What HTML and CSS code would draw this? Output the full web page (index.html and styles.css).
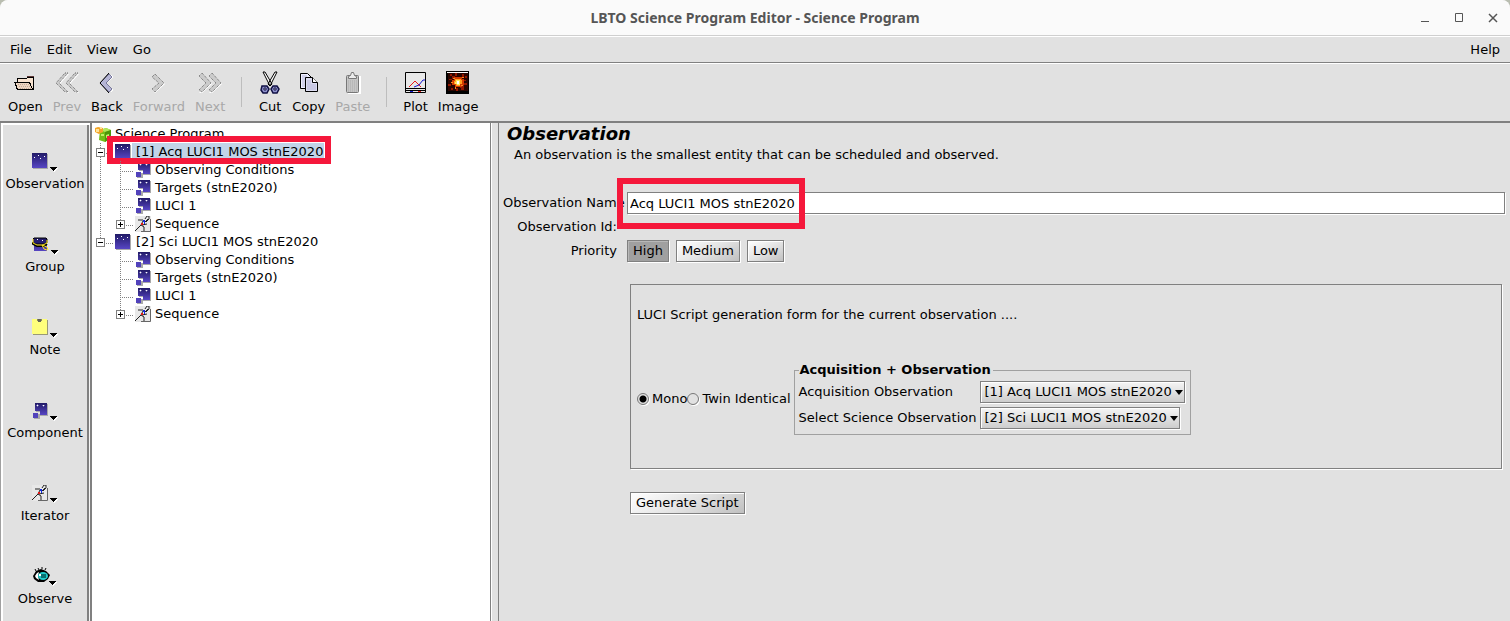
FILE: index.html
```html
<!DOCTYPE html>
<html lang="en">
<head>
  <meta charset="UTF-8">
  <meta name="viewport" content="width=device-width, initial-scale=1.0">
  <title>LBTO Science Program Editor - Science Program</title>
  <link rel="stylesheet" href="styles.css">
</head>
<body>

  <!-- Shared icons -->
  <svg class="icon-defs" width="0" height="0" aria-hidden="true">
    <defs>
      <linearGradient id="night" x1="0" y1="0" x2="0" y2="1">
        <stop offset="0" stop-color="#211a66"/>
        <stop offset="1" stop-color="#5746c4"/>
      </linearGradient>
      <symbol id="icon-observation" viewBox="0 0 16 16">
        <path d="M1 1h15v15H1z" fill="#a9a9a9"/>
        <path d="M0 0h15v15H0z" fill="url(#night)"/>
        <path d="M2 4h1v1H2zM6 2h1v1H6zM8 5h1v1H8zM12 3h1v1h-1z" fill="#fff"/>
      </symbol>
      <symbol id="icon-component" viewBox="0 0 16 16">
        <path d="M4 1h12v12H8V9H4zM2 11h6v5H2z" fill="#a9a9a9"/>
        <path d="M3 0h12v12H8V8H3z" fill="url(#night)"/>
        <path d="M1 10h5v5H1z" fill="#5142bb"/>
        <path d="M5 2h1v1H5zM11 2h1v1h-1z" fill="#fff"/>
        <path d="M4 2h1v1H4zM6 2h1v1H6zM5 1h1v1H5zM5 3h1v1H5zM10 2h1v1h-1zM12 2h1v1h-1zM11 3h1v1h-1z" fill="#6f69ad"/>
      </symbol>
      <symbol id="icon-runner" viewBox="0 0 16 16">
        <path d="M0 0h16v16H0z" fill="#e8e8e8"/>
        <path d="M15.500 3v12.500H6" fill="none" stroke="#666"/>
        <path d="M3 4h5l2 2 3-3M8 5L6 9l-3 3-3 3M6 9l3 2v4M7 9l5-1M10 3l2-3h2v3l-3 3" fill="none" stroke="#222"/>
        <path d="M8 4h2v2H8zM9 6h1v2H9z" fill="#1028e0"/>
        <path d="M6 7h2v2H6z" fill="#e01818"/>
      </symbol>
      <symbol id="icon-arrow" viewBox="0 0 8 5">
        <path d="M1 1h7v1H7v1H6v1H5v1H4z" fill="#fff"/>
        <path d="M0 0h7v1H6v1H5v1H4v1H3V3H2V2H1V1H0z" fill="#000"/>
      </symbol>
    </defs>
  </svg>

  <div class="window">
    <header class="titlebar">
      <h1 class="window-title">LBTO Science Program Editor - Science Program</h1>
      <div class="window-buttons">
        <button type="button" aria-label="Minimize"><svg width="10" height="10" viewBox="0 0 10 10"><path d="M1 8.500h8" stroke="#555"/></svg></button>
        <button type="button" aria-label="Maximize"><svg width="10" height="10" viewBox="0 0 10 10"><path d="M1.500 .5h7v8h-7z" fill="none" stroke="#555"/></svg></button>
        <button type="button" aria-label="Close"><svg width="10" height="10" viewBox="0 0 10 10"><path d="M1 1l8 8M9 1L1 9" stroke="#555" stroke-width="1.500"/></svg></button>
      </div>
    </header>

    <nav class="menubar">
      <button type="button">File</button>
      <button type="button">Edit</button>
      <button type="button">View</button>
      <button type="button">Go</button>
      <button type="button" class="menu-help">Help</button>
    </nav>

    <div class="toolbar">
      <button type="button" class="tool">
        <svg class="tool-icon" viewBox="0 0 24 24" shape-rendering="crispEdges">
          <path d="M14 5h7v5h-7z" fill="#5c3636"/>
          <path d="M4 7h9l2-1h6v13H4z" fill="#000"/>
          <path d="M5 8h8l2-1h5v10H5z" fill="#f7e2cf"/>
          <path d="M1 11h16l3 8H4z" fill="#000"/>
          <path d="M3 12h13l3 6H5z" fill="#ecd5c2"/>
          <path d="M5 13.500h11M6 15.500h11M7 17.500h11" stroke="#c5a995" stroke-dasharray="1 1"/>
        </svg>
        Open
      </button>
      <button type="button" class="tool" disabled>
        <svg class="tool-icon" viewBox="0 0 24 24">
          <path d="M10 3h4l-9 10 9 9h-3L2 13zM20 3h4l-9 10 9 9h-3l-9-9z" fill="#fff"/>
          <path d="M10 2h3l-9 10 9 9h-3l-9-9zM20 2h3l-9 10 9 9h-3l-9-9z" fill="#cbcbcb" stroke="#666" stroke-dasharray="1 1"/>
        </svg>
        Prev
      </button>
      <button type="button" class="tool">
        <svg class="tool-icon" viewBox="0 0 24 24">
          <path d="M16 4l2 2-7 6 7 7-2 2" fill="none" stroke="#fff"/>
          <path d="M14 3l3 3-6 6 6 6-3 3-9-9z" fill="#b5b5d5" stroke="#777799"/>
          <path d="M14 2l-9 10 9 10" fill="none" stroke="#000"/>
        </svg>
        Back
      </button>
      <button type="button" class="tool" disabled>
        <svg class="tool-icon" viewBox="0 0 24 24">
          <path d="M8 4l10 9-10 9-2-3 7-6-7-6z" fill="#fff"/>
          <path d="M8 3l9 9-9 9-3-3 7-6-7-6z" fill="#cbcbcb" stroke="#666" stroke-dasharray="1 1"/>
        </svg>
        Forward
      </button>
      <button type="button" class="tool" disabled>
        <svg class="tool-icon" viewBox="0 0 24 24">
          <path d="M4 3l10 10-10 9H1l9-9-9-9zM14 3l10 10-10 9h-3l9-9-9-9z" fill="#fff"/>
          <path d="M4 2l9 10-9 9-3-2 7-7-7-7zM14 2l9 10-9 9-3-2 7-7-7-7z" fill="#cbcbcb" stroke="#666" stroke-dasharray="1 1"/>
        </svg>
        Next
      </button>
      <span class="tool-separator"></span>
      <button type="button" class="tool">
        <svg class="tool-icon" viewBox="0 0 24 24">
          <path d="M5 1h2l7 12-2 2zM19 1h-2l-7 12 2 2z" fill="#fff" stroke="#000"/>
          <path d="M4 15h5l2 3-2 4H5l-2-3zM15 15h4l2 3-2 4h-4l-2-4z" fill="#8f91cc" stroke="#111144" stroke-width="1.500"/>
          <path d="M6 17h2v2H6zM16 17h2v2h-2z" fill="#fff" stroke="#111144"/>
        </svg>
        Cut
      </button>
      <button type="button" class="tool">
        <svg class="tool-icon" viewBox="0 0 24 24">
          <path d="M3.500 2.500h7l4 4v11h-11z" fill="#eeeeff" stroke="#000"/>
          <path d="M5 5h5M5 7h7M5 9h7M5 11h5M5 13h5M5 15h5" stroke="#b5b5d7"/>
          <path d="M8.500 6.500h7l5 5v9h-12z" fill="#dcdcf0" stroke="#000"/>
          <path d="M15.500 6.500v5h5" fill="#fff" stroke="#000"/>
          <path d="M10 10h4M10 12h4M10 14h9M10 16h9M10 18h9" stroke="#b5b5d7"/>
        </svg>
        Copy
      </button>
      <button type="button" class="tool" disabled>
        <svg class="tool-icon" viewBox="0 0 24 24">
          <path d="M6 5h14v18H7z" fill="#fff"/>
          <rect x="5.500" y="4.500" width="12" height="17" rx="1" fill="#c6c6c6" stroke="#777"/>
          <path d="M7 10h9M7 12h9M7 14h9M7 16h9M7 18h9M7 20h9" stroke="#aaa" stroke-dasharray="1 1"/>
          <path d="M7.500 7.500v-2l2-1 1-3h2l1 3 2 1v2z" fill="#ececec" stroke="#777"/>
        </svg>
        Paste
      </button>
      <span class="tool-separator"></span>
      <button type="button" class="tool">
        <svg class="tool-icon" viewBox="0 0 24 24">
          <path d="M1.500 1.500h20v20h-20z" fill="#e8e8e8" stroke="#000"/>
          <path d="M2 17.500h19M2 19.500h19" stroke="#000"/>
          <path d="M5 16l6-6 6 6" fill="none" stroke="#e81818"/>
          <path d="M10 16l5-2 4-5h2" fill="none" stroke="#1818d0"/>
          <path d="M6 20h3v1H6z" fill="#1818d0"/><path d="M14 20h3v1h-3z" fill="#e81818"/>
        </svg>
        Plot
      </button>
      <button type="button" class="tool">
        <svg class="tool-icon" viewBox="0 0 24 24" shape-rendering="crispEdges">
          <path d="M0 0h23v23H0z" fill="#000"/>
          <path d="M2 2h20v18H2z" fill="#2b0500"/>
          <path d="M4 3h2v2H4zM9 2h2v3H9zM16 3h2v3h-2zM19 5h2v2h-2zM3 8h3v1H3zM2 13h3v2H2zM5 17h2v2H5zM10 17h2v3h-2zM15 17h3v2h-3zM18 12h3v2h-3zM18 9h2v1h-2zM6 5h3v3H6zM14 14h4v3h-4z" fill="#941800"/>
          <path d="M8 6h8v2h2v6h-2v2H9v-2H6V9h2z" fill="#d33a00"/>
          <path d="M7 7h2v1H7zM16 6h2v1h-2zM5 11h2v1H5zM15 14h2v1h-2zM9 16h1v2H9z" fill="#ff8a20"/>
          <path d="M9 8h6v1h1v4h-2v2h-4v-2H8v-3h1z" fill="#ffa020"/>
          <path d="M10 9h4v5h-3v-1H9v-2h1z" fill="#ffe860"/>
          <path d="M11 10h2v3h-2z" fill="#fff"/>
          <path d="M1 1h21v1H1z" fill="#fff"/>
        </svg>
        Image
      </button>
    </div>

    <main class="workspace">
      <aside class="palette">
        <button type="button" class="palette-item">
          <svg class="palette-icon" viewBox="0 0 26 20">
            <use href="#icon-observation" x="0" y="2" width="16" height="16"/>
            <use href="#icon-arrow" x="18" y="16" width="8" height="5"/>
          </svg>
          Observation
        </button>
        <button type="button" class="palette-item">
          <svg class="palette-icon" viewBox="0 0 26 20">
            <path d="M2 6h13v11H2z" fill="url(#night)"/>
            <path d="M1 5l1-1h12l1 1v4l-3 1H2L1 8" fill="#231c6c" stroke="#000"/>
            <path d="M1 8v2l4 2h7l3-2" fill="none" stroke="#000" stroke-width="2"/>
            <path d="M1 5v4l4 2h6l4-2V6M10 11l5 2 1 3M10 11l2 4 3 1" fill="none" stroke="#ffe619"/>
            <path d="M5 5h1v1H5zM10 6h1v1h-1z" fill="#fff"/>
            <use href="#icon-arrow" x="19" y="16" width="8" height="5"/>
          </svg>
          Group
        </button>
        <button type="button" class="palette-item">
          <svg class="palette-icon" viewBox="0 0 26 20">
            <path d="M1 3h15v15H1z" fill="#999977"/>
            <path d="M0 2h15v15H0z" fill="#ffff7c"/>
            <path d="M5 2h5v2H5z" fill="#888866"/><path d="M6 2h3v3H6z" fill="#666655"/>
            <use href="#icon-arrow" x="18" y="16" width="8" height="5"/>
          </svg>
          Note
        </button>
        <button type="button" class="palette-item">
          <svg class="palette-icon" viewBox="0 0 26 20">
            <use href="#icon-component" x="0" y="3" width="16" height="16"/>
            <use href="#icon-arrow" x="18" y="16" width="8" height="5"/>
          </svg>
          Component
        </button>
        <button type="button" class="palette-item">
          <svg class="palette-icon" viewBox="0 0 26 20">
            <use href="#icon-runner" x="0" y="2" width="16" height="16"/>
            <use href="#icon-arrow" x="18" y="15" width="8" height="5"/>
          </svg>
          Iterator
        </button>
        <button type="button" class="palette-item">
          <svg class="palette-icon" viewBox="0 0 26 20">
            <path d="M1 10l3-5 5-2 5 2 4 4-2 4-4 3H6l-4-3z" fill="#000"/>
            <path d="M3 10l2-3 2-1-1 4 1 4-3-2z" fill="#fff"/>
            <ellipse cx="11" cy="10" rx="5" ry="4" fill="#22cccc"/>
            <path d="M9 8h5v4H9z" fill="#087070"/><path d="M7 8h2v2H7z" fill="#fff"/>
            <path d="M4 5L3 3M7 4L6 2M10 3V1M13 4l1-2" stroke="#000"/>
            <use href="#icon-arrow" x="17" y="15" width="8" height="5"/>
          </svg>
          Observe
        </button>
      </aside>

      <section class="tree-pane">
        <div class="tree-row tree-root">
          <svg class="root-icon" viewBox="0 0 16 16">
            <path d="M5 4l6-2 5 2v8l-6 4-6-2z" fill="#72bd16"/>
            <path d="M5 4l6-2 5 2-6 2z" fill="#b2e65b"/>
            <path d="M10 6l6-2v8l-6 4z" fill="#4c970b"/>
            <path d="M6 8h3v2H6zM11 9l3-1v3l-3 1z" fill="#c0ee68"/>
            <path d="M0 2l3-1 5 1v4L4 8 0 6z" fill="#f3a629"/>
            <path d="M1 3h3v3H1zM5 1h2v2H5z" fill="#ffe39b"/>
          </svg>
          <span>Science Program</span>
        </div>
        <ul class="tree">
          <li>
            <div class="tree-row tree-row-marked">
              <span class="branch"><button type="button" class="expander" aria-label="Collapse"></button></span>
              <svg class="node-icon"><use href="#icon-observation"/></svg>
              <span class="node-title selected">[1] Acq LUCI1 MOS stnE2020</span>
              <span class="marker marker-node"></span>
            </div>
            <ul class="tree">
              <li><div class="tree-row"><span class="branch"></span><svg class="node-icon"><use href="#icon-component"/></svg><span>Observing Conditions</span></div></li>
              <li><div class="tree-row"><span class="branch"></span><svg class="node-icon"><use href="#icon-component"/></svg><span>Targets (stnE2020)</span></div></li>
              <li><div class="tree-row"><span class="branch"></span><svg class="node-icon"><use href="#icon-component"/></svg><span>LUCI 1</span></div></li>
              <li><div class="tree-row"><span class="branch"><button type="button" class="expander closed" aria-label="Expand"></button></span><svg class="node-icon"><use href="#icon-runner"/></svg><span>Sequence</span></div></li>
            </ul>
          </li>
          <li>
            <div class="tree-row">
              <span class="branch"><button type="button" class="expander" aria-label="Collapse"></button></span>
              <svg class="node-icon"><use href="#icon-observation"/></svg>
              <span class="node-title">[2] Sci LUCI1 MOS stnE2020</span>
            </div>
            <ul class="tree">
              <li><div class="tree-row"><span class="branch"></span><svg class="node-icon"><use href="#icon-component"/></svg><span>Observing Conditions</span></div></li>
              <li><div class="tree-row"><span class="branch"></span><svg class="node-icon"><use href="#icon-component"/></svg><span>Targets (stnE2020)</span></div></li>
              <li><div class="tree-row"><span class="branch"></span><svg class="node-icon"><use href="#icon-component"/></svg><span>LUCI 1</span></div></li>
              <li><div class="tree-row"><span class="branch"><button type="button" class="expander closed" aria-label="Expand"></button></span><svg class="node-icon"><use href="#icon-runner"/></svg><span>Sequence</span></div></li>
            </ul>
          </li>
        </ul>
      </section>

      <section class="editor">
        <h2>Observation</h2>
        <p class="description">An observation is the smallest entity that can be scheduled and observed.</p>

        <form class="observation-form">
          <label for="obsName">Observation Name</label>
          <div class="name-field">
            <input type="text" id="obsName" value="Acq LUCI1 MOS stnE2020">
            <span class="marker marker-name"></span>
          </div>
          <span class="form-label">Observation Id:</span>
          <span></span>
          <span class="form-label">Priority</span>
          <div class="priority">
            <button type="button" class="btn pressed">High</button>
            <button type="button" class="btn">Medium</button>
            <button type="button" class="btn">Low</button>
          </div>
        </form>

        <form class="script-form">
          <div class="script-box">
            <p class="script-intro">LUCI Script generation form for the current observation ....</p>
            <div class="script-options">
              <label class="radio"><input type="radio" name="mode" checked>Mono</label>
              <label class="radio"><input type="radio" name="mode">Twin Identical</label>
              <fieldset class="pairing">
                <legend>Acquisition + Observation</legend>
                <label for="acq">Acquisition Observation</label>
                <span class="select">
                  <select id="acq"><option>[1] Acq LUCI1 MOS stnE2020</option></select>
                </span>
                <label for="sci">Select Science Observation</label>
                <span class="select">
                  <select id="sci"><option>[2] Sci LUCI1 MOS stnE2020</option></select>
                </span>
              </fieldset>
            </div>
          </div>
          <button type="button" class="btn">Generate Script</button>
        </form>
      </section>
    </main>
  </div>

</body>
</html>
```

FILE: styles.css
```css
* {
  box-sizing: border-box;
}
body {
  margin: 0;
  background-color: #b9bdb0;
  color: #000;
  font-family: "DejaVu Sans", sans-serif;
  font-size: 13px;
  line-height: 16px;
}
button, input, select {
  font: inherit;
  color: inherit;
  margin: 0;
}
button {
  padding: 0;
  border: 0;
  background: none;
}
.icon-defs {
  position: absolute;
}
.window {
  display: flex;
  flex-direction: column;
  min-height: 100vh;
  background-color: #e1e1e1;
  border-radius: 8px 8px 0 0;
  overflow: hidden;
}

/* Title bar */
.titlebar {
  display: grid;
  grid-template-columns: 1fr auto 1fr;
  align-items: center;
  height: 36px;
  background-color: #fafafa;
  border-bottom: 1px solid #cfcfcf;
}
.window-title {
  grid-column: 2;
  margin: 0;
  color: #555;
  font-family: "Noto Sans", sans-serif;
  font-size: 14px;
  font-weight: bold;
}
.window-buttons {
  display: flex;
  justify-content: flex-end;
  gap: 24px;
  padding-right: 12px;
}
.window-buttons svg {
  display: block;
}

/* Menu bar */
.menubar {
  display: flex;
  gap: 15px;
  height: 27px;
  padding: 0 10px;
  border-top: 1px solid #fff;
  border-bottom: 1px solid #808080;
}
.menu-help {
  margin-left: auto;
}

/* Toolbar */
.toolbar {
  display: flex;
  align-items: flex-start;
  gap: 10px;
  height: 60px;
  padding: 7px 8px 0;
  border-top: 1px solid #fff;
  border-bottom: 2px solid #808080;
}
.tool {
  display: flex;
  flex-direction: column;
  align-items: center;
  gap: 4px;
}
.tool:disabled {
  color: #a8a8a8;
}
.tool-icon {
  width: 24px;
  height: 24px;
}
.tool-separator {
  width: 1px;
  height: 30px;
  margin: 6px 6px 0;
  background-color: #bdbdbd;
}

/* Main area */
.workspace {
  display: flex;
  flex: 1;
}
.palette {
  display: flex;
  flex-direction: column;
  gap: 42px;
  flex: 0 0 92px;
  padding: 28px 0 0;
  border-left: 1px solid #a0a0a0;
  border-right: 2px solid #808080;
  box-shadow: inset 2px 2px #fff, inset -1px 0 #f4f4f4, inset -3px 0 #808080;
}
.palette-item {
  display: flex;
  flex-direction: column;
  align-items: center;
  gap: 5px;
  padding-right: 1px;
}
.palette-icon {
  width: 26px;
  height: 20px;
  overflow: visible;
}

/* Program tree */
.tree-pane {
  flex: 0 0 399px;
  padding: 2px 3px;
  background-color: #fff;
  border-right: 1px solid #808080;
}
.tree {
  margin: 0;
  padding: 0;
  list-style: none;
}
.tree .tree {
  padding-left: 20px;
}
.tree li:not(:last-child) {
  background: linear-gradient(#808080 50%, transparent 50%) 5px 0 / 1px 2px repeat-y;
}
.tree-row {
  display: flex;
  align-items: center;
  height: 18px;
}
.tree-root {
  gap: 4px;
}
.root-icon {
  width: 16px;
  height: 16px;
}
.branch {
  position: relative;
  width: 20px;
  height: 18px;
}
.branch::before {
  content: "";
  display: block;
  width: 12px;
  height: 10px;
  margin-left: 5px;
  border-left: 1px dotted #808080;
  border-bottom: 1px dotted #808080;
}
.expander {
  position: absolute;
  left: 1px;
  top: 5px;
  width: 9px;
  height: 9px;
  border: 1px solid #808080;
  background: linear-gradient(#000, #000) center / 5px 1px no-repeat #fff;
}
.expander.closed {
  background:
    linear-gradient(#000, #000) center / 5px 1px no-repeat,
    linear-gradient(#000, #000) center / 1px 5px no-repeat #fff;
}
.node-icon {
  width: 16px;
  height: 16px;
  margin-right: 1px;
}
.tree .tree .node-icon {
  margin-right: 4px;
}
.node-title {
  height: 18px;
  padding: 1px 1px 0 4px;
}
.selected {
  background-color: #c2d4e8;
}

/* Red frames drawn over the content */
.marker {
  position: absolute;
  border: 6px solid #f5183b;
  pointer-events: none;
}
.tree-row-marked, .name-field {
  position: relative;
}
.marker-node {
  left: 12px;
  top: -7px;
  width: 224px;
  height: 28px;
}
.marker-name {
  left: -10px;
  top: -14px;
  width: 188px;
  height: 51px;
}

/* Editor */
.editor {
  flex: 1;
  margin-left: 7px;
  padding: 0 5px 0 4px;
  border-left: 1px solid #808080;
  box-shadow: -6px 0 #e1e1e1, -7px 0 #fff;
}
.editor h2 {
  margin: 0 4px;
  font-size: 18px;
  font-style: italic;
  line-height: 22px;
}
.description {
  margin: 2px 11px 29px;
}
.observation-form {
  display: grid;
  grid-template-columns: 114px 1fr;
  column-gap: 10px;
  row-gap: 5px;
  align-items: center;
  white-space: nowrap;
}
.form-label {
  text-align: right;
}
.name-field input {
  display: block;
  width: 100%;
  height: 22px;
  padding: 0 2px;
  border: 1px solid #808080;
  background-color: #fff;
  box-shadow: 1px 1px #fff;
}
.priority {
  display: flex;
  gap: 7px;
}
.btn {
  height: 22px;
  padding: 0 5px;
  border: 1px solid #808080;
  background: linear-gradient(150deg, #fff, #e4e4e4 50%, #c0c0c0);
  box-shadow: 1px 1px #fff, inset 1px 1px #fff;
}
.btn.pressed {
  background: #a0a0a0;
  box-shadow: 1px 1px #fff, inset 1px 1px #b8b8b8;
}
.script-form {
  margin: 22px 3px 0 127px;
}
.script-box {
  height: 185px;
  margin-bottom: 23px;
  padding: 22px 6px 0;
  border: 1px solid #808080;
  box-shadow: 1px 1px #fff;
}
.script-intro {
  margin: 0 0 39px;
}
.script-options {
  display: flex;
  align-items: center;
}
.radio {
  display: flex;
  align-items: center;
  gap: 3px;
}
.radio input {
  appearance: none;
  width: 12px;
  height: 12px;
  border: 1px solid #777;
  border-radius: 50%;
  box-shadow: 1px 1px #fff;
}
.radio input:checked {
  background: radial-gradient(circle, #000 3px, transparent 4px);
}
.pairing {
  display: grid;
  grid-template-columns: auto auto;
  gap: 4px;
  align-items: center;
  justify-items: start;
  margin: 0 0 0 3px;
  padding: 3px 5px 5px 4px;
  border: 1px solid #a0a0a0;
}
.pairing legend {
  padding: 0 2px 0 1px;
  font-weight: bold;
}
.select {
  position: relative;
}
.select select {
  appearance: none;
  display: block;
  height: 22px;
  padding: 0 12px 0 3px;
  border: 1px solid #808080;
  border-radius: 0;
  background: linear-gradient(#f5f5f5, #cdcdcd);
  box-shadow: 1px 1px #fff, inset 1px 1px #fff;
}
.select::after {
  content: "";
  position: absolute;
  right: 2px;
  top: 9px;
  border: 4px solid transparent;
  border-top: 5px solid #000;
  border-bottom: 0;
  pointer-events: none;
}
```
